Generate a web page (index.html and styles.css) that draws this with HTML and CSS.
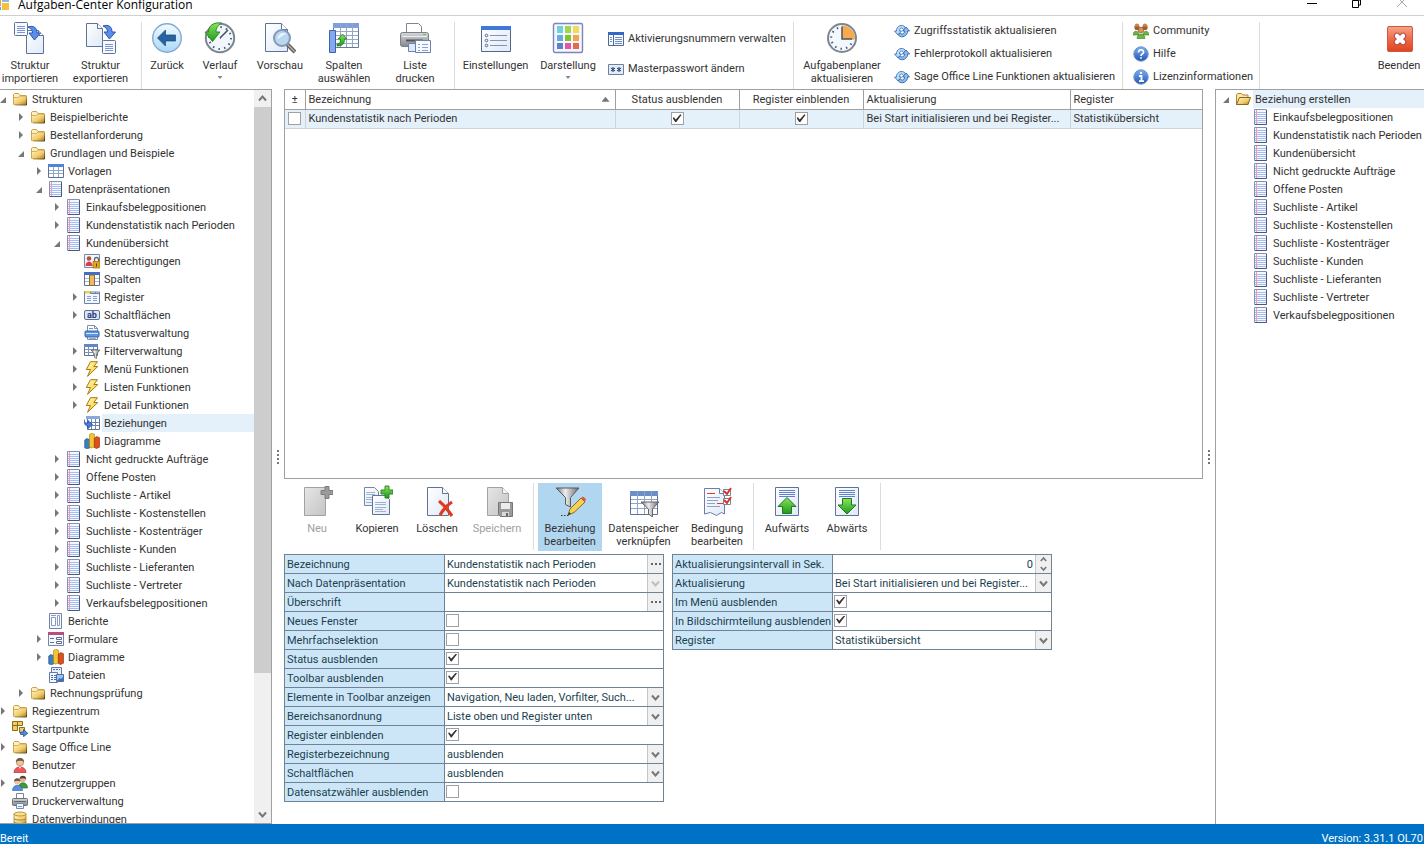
FILE: index.html
```html
<!DOCTYPE html>
<html lang="de">
<head>
<meta charset="utf-8">
<title>Aufgaben-Center Konfiguration</title>
<link rel="stylesheet" href="styles.css">
</head>
<body>
<svg class="defs" aria-hidden="true">
<defs>
<linearGradient id="gFolder" x1="0" y1="0" x2="1" y2="1"><stop offset="0" stop-color="#fff6c8"/><stop offset=".6" stop-color="#f0cb68"/><stop offset="1" stop-color="#b07c20"/></linearGradient>
<linearGradient id="gEdge" x1="0" y1="1" x2="1" y2="0"><stop offset="0" stop-color="#c9a04a"/><stop offset=".5" stop-color="#4a3510"/><stop offset="1" stop-color="#c9a04a"/></linearGradient>
<linearGradient id="gPage" x1="0" y1="0" x2="1" y2="1"><stop offset="0" stop-color="#fff"/><stop offset="1" stop-color="#dfe9f7"/></linearGradient>
<linearGradient id="gGrey" x1="0" y1="0" x2="1" y2="1"><stop offset="0" stop-color="#e6e6e6"/><stop offset="1" stop-color="#c4c4c4"/></linearGradient>
<linearGradient id="gMetal" x1="0" y1="0" x2="1" y2="0"><stop offset="0" stop-color="#6e6e72"/><stop offset=".4" stop-color="#eeeeee"/><stop offset="1" stop-color="#6a6a6e"/></linearGradient>
<linearGradient id="gBlue" x1="0" y1="0" x2="0" y2="1"><stop offset="0" stop-color="#7fb0f2"/><stop offset="1" stop-color="#1e55b4"/></linearGradient>
<linearGradient id="gSky" x1="0" y1="0" x2="0" y2="1"><stop offset="0" stop-color="#f4fbff"/><stop offset="1" stop-color="#a9d7f8"/></linearGradient>
<linearGradient id="gGreen" x1="0" y1="0" x2="0" y2="1"><stop offset="0" stop-color="#8be35c"/><stop offset="1" stop-color="#1d9a1d"/></linearGradient>
<linearGradient id="gRed" x1="0" y1="0" x2="0" y2="1"><stop offset="0" stop-color="#f7a58c"/><stop offset=".5" stop-color="#ee6a48"/><stop offset="1" stop-color="#e0431f"/></linearGradient>
<linearGradient id="gBolt" x1="0" y1="0" x2="1" y2="1"><stop offset="0" stop-color="#fffbc4"/><stop offset="1" stop-color="#f5c518"/></linearGradient>
<linearGradient id="gBody" x1="0" y1="0" x2="0" y2="1"><stop offset="0" stop-color="#d5d7da"/><stop offset="1" stop-color="#85888d"/></linearGradient>

<symbol id="folder" viewBox="0 0 16 16"><path d="M1.500 12.500v-9l1-1h4l1.500 2h6v8z" fill="#fdf0bd" stroke="#c9a04a"/><path d="M1.500 13.500V6.500h5l1.500-1.500h6.500v8.500z" fill="url(#gFolder)" stroke="#c9a04a" stroke-width=".8"/><path d="M3 14h11.500V5" fill="none" stroke="url(#gEdge)"/></symbol>
<symbol id="folderopen" viewBox="0 0 16 16"><path d="M1.500 13.500v-10l1-1h4l1.500 1.500h5v9.500z" fill="#f9e6a4" stroke="#a98733"/><path d="M1.500 13.500l3-7h11l-2.500 7z" fill="url(#gFolder)" stroke="#8a691f"/></symbol>
<symbol id="list" viewBox="1 0 16 16"><path d="M2.500.5h12v15h-12z" fill="#f4f8ff" stroke="#8790b4"/><path d="M14.500 1v14.500H3" fill="none" stroke="#4e5878"/><path d="M3 3.500h11M3 5.500h11M3 7.500h11M3 9.500h11M3 11.500h11M3 13.500h11" stroke="#a5bdf0"/><path d="M4.500 1v14" stroke="#ef9ab0"/></symbol>
<symbol id="table" viewBox="0 0 16 16"><path d="M.5 1.500h15v13H.5z" fill="#fff" stroke="#5d7296"/><path d="M0 1h16v3H0z" fill="#4f83dc"/><path d="M1 7.500h14M1 10.500h14M5.500 4v10M10.500 4v10" stroke="#93a9cc"/></symbol>
<symbol id="auth" viewBox="0 0 16 16"><path d="M.5 1.500h15v13H.5z" fill="#f2f6fc" stroke="#7787a5"/><circle cx="5" cy="5.500" r="2.300" fill="#b1523d"/><path d="M1.500 13c0-6 7-6 7 0z" fill="#e03a44"/><path d="M10.500 9V6.500a2 2 0 014 0V9" fill="none" stroke="#666" stroke-width="1.300"/><path d="M9 8.500h7v6.500H9z" fill="#e2a51e" stroke="#9d6b0b" stroke-width=".7"/><path d="M12 10.500h1v3h-1z" fill="#5f4207"/></symbol>
<symbol id="cols" viewBox="0 0 16 16"><path d="M.5 1.500h15v13H.5z" fill="#fff" stroke="#5d7296"/><path d="M0 1h16v3H0z" fill="#3f6fc0"/><path d="M1 7.500h14M1 10.500h14" stroke="#a9b9d4"/><path d="M5.500 4h5v10.500h-5z" fill="#f2b760" stroke="#7d6a4a"/></symbol>
<symbol id="register" viewBox="0 0 16 16"><path d="M.5 14.500v-12h6v2h9v10z" fill="#f1f6ff" stroke="#6d80a6"/><path d="M1 2h6v2.500H1z" fill="#f2cd4c"/><path d="M6.500 4.500V3h5v1.500M11.500 3h4v2" fill="none" stroke="#6d80a6"/><path d="M3 7.500h4M3 9.500h4M3 11.500h4M9 7.500h4M9 9.500h4M9 11.500h4" stroke="#8aa2d0"/></symbol>
<symbol id="ab" viewBox="0 0 16 16"><rect x=".5" y="3.500" width="15" height="9" rx="1.500" fill="#dfe5f5" stroke="#626f8f"/><text x="8" y="11" class="ab-text">ab</text></symbol>
<symbol id="status" viewBox="0 0 16 16"><path d="M3.500 14.500V.5h7l3 3v11z" fill="#fff" stroke="#7f8fae"/><path d="M10.500.5v3h3M5 3.500h4" fill="none" stroke="#7f8fae"/><rect x="1" y="6" width="14" height="6" rx="1" fill="#5f95df" stroke="#3564ab"/><path d="M2 8.500h12" stroke="#d2e5ff"/><path d="M5 13.500h7" stroke="#9aabc8"/></symbol>
<symbol id="filter" viewBox="0 0 16 16"><path d="M.5 1.500h13v11H.5z" fill="#fff" stroke="#5d7296"/><path d="M0 1h14v3H0z" fill="#6585c4"/><path d="M1 6.500h12M1 9.500h12M4.500 4v8M9.500 4v8" stroke="#7d92b8"/><path d="M7 7h9l-3.500 4v4.500l-2-1V11z" fill="url(#gMetal)" stroke="#606366" stroke-width=".7"/></symbol>
<symbol id="bolt" viewBox="0 0 16 16"><path d="M6.500.7h7L9.800 5.500h4L3.500 15.300l3-6.800H2.300z" fill="url(#gBolt)" stroke="#a97a10"/></symbol>
<symbol id="relation" viewBox="0 0 16 16"><path d="M3.500 1.500h12v13h-12z" fill="#fff" stroke="#5d7296"/><path d="M2 1h14v3H2z" fill="#8ba8dc"/><path d="M4 7.500h11M4 10.500h11M7.500 4v10M11.500 4v10" stroke="#6d84ad"/><path d="M0 4.500c0 3 1.500 3.500 4 3.500V5.500l4.500 4-4.500 4V11C1 11 0 8.500 0 4.500z" fill="#4b7be0" stroke="#22479b" stroke-width=".7"/></symbol>
<symbol id="chart" viewBox="0 0 16 16"><path d="M.7 7l2-1.500 3 1V15l-3 .8-2-1z" fill="#3c7fc0" stroke="#1c4f88" stroke-width=".6"/><path d="M5.500 1.500l2-1.300 3 1V14l-3 1-2-1z" fill="#f3c530" stroke="#a87d10" stroke-width=".6"/><path d="M10.300 5l2.500-1.500 2.700 1.200v9.500L12.500 15.500l-2.200-1z" fill="#dd4f1c" stroke="#8f2a08" stroke-width=".6"/></symbol>
<symbol id="report" viewBox="1 0 16 16"><path d="M2.500.5h12v15h-12z" fill="#f4f8ff" stroke="#7583a5"/><path d="M4.500 4.500h4v8h-4zM10.500 2.500h2v10h-2zM4 2.500h5" fill="#fff" stroke="#8b9bc0"/></symbol>
<symbol id="form" viewBox="0 0 16 16"><path d="M.5 1.500h15v13H.5z" fill="#f4f8ff" stroke="#7583a5"/><path d="M0 1h16v3H0z" fill="#b94c80"/><path d="M2 7.500h4M2 11.500h4" stroke="#5e6c90"/><path d="M8.500 6.500h5v2h-5zM8.500 10.500h5v2h-5z" fill="#fff" stroke="#5e6c90"/></symbol>
<symbol id="files" viewBox="0 0 16 16"><path d="M3.500.5h10v9h-10z" fill="#e7effc" stroke="#6279a8"/><path d="M1.500 5.500h8v10h-8z" fill="#f4f8ff" stroke="#6279a8"/><path d="M3 8.500h5M3 10.500h5M3 12.500h5M5 2.500h7" stroke="#4869ad" stroke-dasharray="2 1"/><path d="M8.500 7.500h7v7h-7z" fill="#9cc4ee" stroke="#4d6fa4"/><path d="M9 14l2.500-3 1.500 1 2-2v4z" fill="#3a70b5"/></symbol>
<symbol id="start" viewBox="0 0 16 16"><path d="M.5.5h5v4h-5zM5.500.5h5v4h-5zM.5 4.500h5v5h-5zM7.500 6.500h5v5h-5z" fill="#f4cd62" stroke="#8d6a1c"/><path d="M8.500 11h3V8.500l4.300 3.800-4.300 3.400V13.500h-3z" fill="#4f87e0" stroke="#1f478f" stroke-width=".7"/></symbol>
<symbol id="user" viewBox="0 0 16 16"><path d="M2 15.500c0-7.500 12-7.500 12 0z" fill="#f0565a" stroke="#b32c31" stroke-width=".7"/><circle cx="8" cy="5" r="3.800" fill="#f0c59a" stroke="#9c6c3c" stroke-width=".6"/><path d="M4 5C3.800-.5 12.200-.5 12 5 10 3.500 7 3.200 4 5z" fill="#6c5a50"/><path d="M7 10l1 2 1-2z" fill="#fff"/></symbol>
<symbol id="users" viewBox="0 0 16 16"><path d="M6.500 13c0-7 9-7 9 0z" fill="#3f9a3c" stroke="#256b23" stroke-width=".6"/><circle cx="10.800" cy="4" r="3" fill="#e4b587"/><path d="M7.500 4c0-4.500 7-4.500 6.600.4C12.500 3 10 3 7.500 4z" fill="#554138"/><path d="M.5 15.500c0-7 10-7 10 0z" fill="#5c8ee0" stroke="#305ba8" stroke-width=".6"/><circle cx="5.200" cy="6.500" r="3" fill="#f0c59a"/><path d="M2 6.500c0-4.500 6.800-4.500 6.500.2C7 5.500 4.500 5.500 2 6.500z" fill="#6c5448"/></symbol>
<symbol id="print16" viewBox="0 0 16 16"><path d="M4.500 6V.5h7V6" fill="#fff" stroke="#7c8597"/><rect x=".5" y="5.500" width="15" height="7" rx="1" fill="url(#gBody)" stroke="#6b6f76"/><path d="M2 8.500h12" stroke="#666"/><path d="M4.500 10.500h7v5h-7z" fill="#eef5ff" stroke="#7587a5"/><path d="M6 13.500h4" stroke="#6aa0e0"/></symbol>
<symbol id="db" viewBox="0 0 16 16"><path d="M2 3v11c0 2.200 12 2.200 12 0V3z" fill="url(#gFolder)" stroke="#9a7216" stroke-width=".7"/><ellipse cx="8" cy="3" rx="6" ry="2" fill="#fbe08a" stroke="#9a7216" stroke-width=".7"/><path d="M2 7.500c1 2 11 2 12 0M2 11c1 2 11 2 12 0" fill="none" stroke="#9a7216" stroke-width=".8"/></symbol>

<symbol id="curve" viewBox="0 0 14 16"><path d="M1 2C7 0 10 3 10 8h3.500L7.500 15 2 8h3.500C5.500 5 4 3.500 1 2z" fill="#5b8ee8" stroke="#2b58b0"/></symbol>
<symbol id="imp" viewBox="0 0 32 32"><path d="M12.500 8.500h12l5 5v18h-17z" fill="url(#gPage)" stroke="#5f7396"/><path d="M24.500 8.500v5h5" fill="#fff" stroke="#5f7396"/><rect x=".5" y=".5" width="13" height="13" rx="1" fill="#f6f9ff" stroke="#5f7396"/><path d="M3 4.500h8M3 6.500h8M3 8.500h8M3 10.500h8" stroke="#7d96cc"/><use href="#curve" x="13" y="3" width="14" height="16"/></symbol>
<symbol id="exp" viewBox="0 0 32 32"><path d="M1.500 1.500h11l5 5v18h-16z" fill="url(#gPage)" stroke="#5f7396"/><path d="M12.500 1.500v5h5" fill="#fff" stroke="#5f7396"/><rect x="17.500" y="18.500" width="13" height="13" rx="1" fill="#f6f9ff" stroke="#5f7396"/><path d="M20 22.500h8M20 24.500h8M20 26.500h8M20 28.500h8" stroke="#7d96cc"/><use href="#curve" x="17" y="2" width="14" height="16"/></symbol>
<symbol id="back" viewBox="0 0 32 32"><circle cx="16" cy="16" r="14.300" fill="url(#gSky)" stroke="#86a9d4" stroke-width="1.400"/><path d="M6.500 16l8-8v5h10v6h-10v5z" fill="#27639f" stroke="#174878" stroke-width=".7"/></symbol>
<symbol id="history" viewBox="0 0 32 32"><circle cx="16" cy="16" r="14.200" fill="#f2f7fb" stroke="#7d858f" stroke-width="2"/><circle cx="16" cy="16" r="11" fill="none" stroke="#4a5a78" stroke-width="2" stroke-dasharray="1.500 4.260"/><path d="M16 16L24 8M16 16h1" stroke="#44506a" stroke-width="1.600"/><path d="M17.500 1C9 0 4.500 4 4.500 10H1l7.500 9.500L16 10h-4c0-3 1-6 5.500-9z" fill="url(#gGreen)" stroke="#2c8a28"/></symbol>
<symbol id="preview" viewBox="0 0 32 32"><path d="M1.500 1.500h16l6 6v22h-22z" fill="url(#gPage)" stroke="#5f7396"/><path d="M17.500 1.500v6h6" fill="#fff" stroke="#5f7396"/><path d="M23 22l8 8" stroke="#5f5f64" stroke-width="4"/><path d="M23.500 22.500l7 7" stroke="#c6b9a2" stroke-width="1.300"/><circle cx="18" cy="16" r="8" fill="#b9d7f1" stroke="#8398b8" stroke-width="2"/><path d="M13 17c2-6 6-7 10-5-4 0-6 4-10 5z" fill="#eaf5ff"/></symbol>
<symbol id="colsel" viewBox="0 0 32 32"><path d="M5.500 1.500h25v24h-25z" fill="#fff" stroke="#6677a0"/><path d="M5 1h26v5H5z" fill="#7f9fd8"/><path d="M6 9.500h24M6 13.500h24M6 17.500h24M6 21.500h24M12.500 1v24M18.500 1v24M24.500 1v24" stroke="#93a7cb"/><path d="M1.500 8.500h6v22h-6z" fill="#84a9ee" stroke="#3b62b2"/><path d="M9 22c3 0 3.500-2 3.500-5H10l4.500-5 4.500 5h-2.500c0 5-2 7-7.500 7z" fill="url(#gGreen)" stroke="#237d20" stroke-width=".8"/></symbol>
<symbol id="print32" viewBox="0 0 32 32"><path d="M7.500 12V1.500h12l3 3V12z" fill="#fff" stroke="#7c8597"/><rect x="1.500" y="10.500" width="28" height="14" rx="2" fill="url(#gBody)" stroke="#7b7f86"/><path d="M3 14.500h25" stroke="#eee"/><path d="M7 18.500h17" stroke="#555" stroke-width="2"/><path d="M24 12h3v1h-3z" fill="#50d030"/><path d="M9.500 21.500h8v8h-8z" fill="#dcebff" stroke="#6a82ad"/><path d="M16.500 18.500h15v12h-15z" fill="#f7faff" stroke="#6a82ad"/><path d="M19 22.500h2M23 22.500h6M19 25.500h2M23 25.500h6M19 28.500h2M23 28.500h6" stroke="#87a3d8"/></symbol>
<symbol id="settings" viewBox="0 0 32 32"><path d="M1.500 4.500h29v25h-29z" fill="url(#gPage)" stroke="#55688c"/><path d="M1 4h30v4H1z" fill="#3e78dc"/><path d="M10 13.500h17M10 18.500h17M10 23.500h17" stroke="#7e94b8"/><circle cx="6.500" cy="13.500" r="1.300" fill="none" stroke="#55688c"/><circle cx="6.500" cy="18.500" r="1.300" fill="none" stroke="#55688c"/><circle cx="6.500" cy="23.500" r="1.300" fill="none" stroke="#55688c"/></symbol>
<symbol id="palette" viewBox="0 0 32 32"><rect x="1.500" y="1.500" width="29" height="29" rx="1.500" fill="#f3f5ff" stroke="#7c86b8" stroke-width="1.400"/><path d="M5 4h6v7H5z" fill="#6fd0de"/><path d="M13 4h6v7h-6z" fill="#a3d64c"/><path d="M21 4h6v7h-6z" fill="#f1dc5a"/><path d="M5 13h6v6H5z" fill="#69a9e4"/><path d="M13 13h6v6h-6z" fill="#7fc62c"/><path d="M21 13h6v6h-6z" fill="#f4a54c"/><path d="M5 21h6v6H5z" fill="#5d80c8"/><path d="M13 21h6v6h-6z" fill="#e455a5"/><path d="M21 21h6v6h-6z" fill="#e8694a"/></symbol>
<symbol id="activation" viewBox="0 0 16 16"><path d="M.5 1.500h15v13H.5z" fill="#f4f8ff" stroke="#55688c"/><path d="M0 1h16v3H0z" fill="#3467c6"/><path d="M5.500 4v10" stroke="#55688c"/><path d="M2 6.500h2M2 8.500h2M2 10.500h2M7 6.500h7M7 8.500h7M7 10.500h7M7 12.500h7" stroke="#7490c2"/></symbol>
<symbol id="password" viewBox="0 0 16 16"><path d="M.5 3.500h15v10H.5z" fill="#e2ecfa" stroke="#6d7f9f"/><path d="M5 6v5M3 7l4 3M7 7l-4 3M11 6v5M9 7l4 3M13 7l-4 3" stroke="#23395f"/></symbol>
<symbol id="planner" viewBox="0 0 32 32"><circle cx="16" cy="16" r="14" fill="#f3f8fd" stroke="#7d858f" stroke-width="2"/><circle cx="16" cy="16" r="10.800" fill="none" stroke="#4a5a78" stroke-width="2" stroke-dasharray="1.500 4.150"/><path d="M16 17V3.500A13 13 0 0129 17z" fill="#f9a94e"/><path d="M16 4.500V17h10" fill="none" stroke="#4c5260" stroke-width="1.500"/></symbol>
<symbol id="refresh" viewBox="0 0 16 16"><path d="M12 5.500C10 1 4 1.500 2.500 6.500V8H.5L4 12l3.500-4H5.500C5.500 5 8 4 9.500 6.500z" fill="#b9daf8" stroke="#3f76b8" stroke-width=".9"/><path d="M4 11.500c2 3.500 8 3 9.500-2V8h2L12 4 8.500 8h2c0 3-2.500 4-4 2z" fill="#8fbcec" stroke="#2f66a8" stroke-width=".9"/></symbol>
<symbol id="community" viewBox="0 0 16 16"><path d="M0 12c0-5 6-5 6 0zM10 12c0-5 6-5 6 0zM4 15.500c0-6 8-6 8 0z" fill="#68b845" stroke="#3d7d25" stroke-width=".6"/><circle cx="4" cy="4.500" r="2.600" fill="#a35c2a"/><circle cx="12" cy="4.500" r="2.600" fill="#a35c2a"/><circle cx="8" cy="7" r="2.800" fill="#d8955a" stroke="#8d4a1e" stroke-width=".7"/><path d="M1.500 3.500c0-4 5-4 5 0zM9.500 3.500c0-4 5-4 5 0z" fill="#c88848"/></symbol>
<symbol id="help" viewBox="0 0 16 16"><circle cx="8" cy="8" r="7.200" fill="url(#gBlue)" stroke="#6d93c8"/><path d="M5.500 6.500C5.500 3 10.700 3 10.500 6.300 10.300 8 8 8 8 10M8 11.300v1.500" fill="none" stroke="#fff" stroke-width="1.700"/></symbol>
<symbol id="info" viewBox="0 0 16 16"><circle cx="8" cy="8" r="7.200" fill="url(#gBlue)" stroke="#6d93c8"/><path d="M8 3v2M6 7h2.500v5M6 12.200h5" fill="none" stroke="#fff" stroke-width="1.800"/></symbol>
<symbol id="exit" viewBox="0 0 32 32"><rect x="4.500" y="4.500" width="25" height="25" rx="1.500" fill="url(#gRed)" stroke="#c9593f"/><path d="M14 14l6 6M20 14l-6 6" stroke="#b04a38" stroke-width="6.500" stroke-linecap="round"/><path d="M14 14l6 6M20 14l-6 6" stroke="#fff" stroke-width="4.500" stroke-linecap="round"/></symbol>

<symbol id="new" viewBox="0 0 32 32"><path d="M3.500 2.500h21v28h-21z" fill="url(#gGrey)" stroke="#a2a2a2"/><path d="M24 1.500h4v4h4v4h-4v4h-4v-4h-4v-4h4z" fill="#9b9b9b" stroke="#7c7c7c"/></symbol>
<symbol id="copy" viewBox="0 0 32 32"><path d="M3.500 2.500h10l4 4v14h-14z" fill="url(#gPage)" stroke="#7186ab"/><path d="M5 7.500h9M5 9.500h9M5 12.500h7M5 14.500h7M5 17.500h7" stroke="#9fb2d4"/><path d="M11.500 10.500h13l4 4v15h-17z" fill="url(#gPage)" stroke="#5f7396"/><path d="M14 17.500h11M14 19.500h11M14 22.500h11M14 24.500h8M14 26.500h11" stroke="#9fb2d4"/><path d="M24 1h4v4h4v4h-4v4h-4V9h-4V5h4z" fill="url(#gGreen)" stroke="#238020" stroke-width=".9"/></symbol>
<symbol id="delete" viewBox="0 0 32 32"><path d="M6.500 2.500h15l6 6v22h-21z" fill="url(#gPage)" stroke="#5f7396"/><path d="M21.500 2.500v6h6" fill="#fff" stroke="#5f7396"/><path d="M18 16c5 4 9 9 13 15M31 17c-5 3-9 8-12 13" fill="none" stroke="#e03a20" stroke-width="3.200"/></symbol>
<symbol id="save" viewBox="0 0 32 32"><path d="M6.500 2.500h15l6 6v22h-21z" fill="url(#gGrey)" stroke="#a2a2a2"/><path d="M21.500 2.500v6h6" fill="#f4f4f4" stroke="#a2a2a2"/><path d="M17.500 17.500h14v14h-12l-2-2z" fill="#9a9a9a" stroke="#777"/><path d="M20 18h9v6h-9z" fill="#ececec"/><path d="M21 27h7v4h-7z" fill="#d9d9d9"/><path d="M25 28h2v3h-2z" fill="#666"/></symbol>
<symbol id="edit" viewBox="0 0 32 32"><path d="M2 3h23l-8.500 9.500V22l-5-2.500V12.500z" fill="url(#gMetal)" stroke="#58595c"/><path d="M7 30.500h9" stroke="#333" stroke-dasharray="1.500 1.500"/><path d="M14 30l2-6L27 13l4 4-11 10.500z" fill="#f5cf56" stroke="#8d6a1c"/><path d="M27 13l2-1.500 3 2.500-1 3z" fill="#e3573f"/><path d="M14 30l1-3 2 2z" fill="#333"/></symbol>
<symbol id="datastore" viewBox="0 0 32 32"><path d="M2.500 6.500h27v23h-27z" fill="#fff" stroke="#5d7296"/><path d="M2 6h28v5H2z" fill="#6b8ec8"/><path d="M3 14.500h26M3 18.500h26M3 23.500h26M9.500 6v23M16.500 6v23M23.500 6v23" stroke="#8fa4c8"/><path d="M13 17h18l-6.500 7v8l-4-3v-5z" fill="url(#gMetal)" stroke="#626467"/></symbol>
<symbol id="condition" viewBox="0 0 32 32"><path d="M3.500 29V3.500h15l5 5V29l-3-1.500-5 3-6-3z" fill="url(#gPage)" stroke="#6a7ea6"/><path d="M18.500 3.500v5h5" fill="#fff" stroke="#6a7ea6"/><path d="M6 8.500h8M16 18.500h6" stroke="#dd3c28"/><path d="M6 12.500h13M6 15.500h11M6 18.500h8M6 21.500h13" stroke="#8ea2c8"/><path d="M22.500 4.500h7v6h-7zM22.500 13.500h7v6h-7z" fill="#fff" stroke="#7484a5"/><path d="M23 6l3 3 4-6M23 15l3 3 4-6" fill="none" stroke="#dc3420" stroke-width="2"/></symbol>
<symbol id="up" viewBox="0 0 32 32"><path d="M4.500 2.500h23v28h-23z" fill="url(#gPage)" stroke="#5f7396"/><path d="M8 5.500h16M8 7.500h16M8 9.500h16M8 11.500h16" stroke="#5c82d0"/><path d="M16 12.500l9 9h-4.500v7h-9v-7H7z" fill="url(#gGreen)" stroke="#1c7a1a"/></symbol>
<symbol id="down" viewBox="0 0 32 32"><path d="M4.500 2.500h23v28h-23z" fill="url(#gPage)" stroke="#5f7396"/><path d="M8 5.500h16M8 7.500h16M8 9.500h16M8 11.500h16" stroke="#5c82d0"/><path d="M16 29l9-9h-4.500v-6.500h-9V20H7z" fill="url(#gGreen)" stroke="#1c7a1a"/></symbol>
<symbol id="app" viewBox="0 0 16 16"><path d="M0 0h6v9H0z" fill="#e8a33c"/><path d="M7 0h7v5H7z" fill="#8eb3e6"/><path d="M7 6h7v7H7z" fill="#f4c044"/><path d="M0 10h6v3H0z" fill="#6d98d8"/></symbol>
<symbol id="chev" viewBox="0 0 9 9"><path d="M1 2.500l3.500 4 3.500-4" fill="none" stroke="currentColor" stroke-width="2"/></symbol>
<symbol id="chevup" viewBox="0 0 9 9"><path d="M1 6.500l3.500-4 3.500 4" fill="none" stroke="currentColor" stroke-width="2"/></symbol>
</defs>
</svg>

<header class="titlebar">
  <svg class="app-icon"><use href="#app"/></svg>
  <h1>Aufgaben-Center Konfiguration</h1>
  <div class="window-buttons">
    <button aria-label="Minimieren"><svg viewBox="0 0 12 12"><path d="M1 3.500h10" stroke="#000"/></svg></button>
    <button aria-label="Wiederherstellen"><svg viewBox="0 0 12 12"><path d="M1.500.5h6v7h-6zM3 0h6.500v5H8" fill="none" stroke="#000"/></svg></button>
    <button aria-label="Schließen"><svg viewBox="0 0 12 12"><path d="M1-3l10 10M11-3L1 7" stroke="#aaa"/></svg></button>
  </div>
</header>

<nav class="ribbon" aria-label="Menüband">
  <div class="group">
    <button class="tool w60"><svg><use href="#imp"/></svg>Struktur<br>importieren</button>
    <button class="tool w81"><svg><use href="#exp"/></svg>Struktur<br>exportieren</button>
  </div>
  <div class="group">
    <button class="tool w50"><svg><use href="#back"/></svg>Zurück</button>
    <button class="tool w56"><svg><use href="#history"/></svg>Verlauf<i class="more"></i></button>
    <button class="tool w64"><svg><use href="#preview"/></svg>Vorschau</button>
    <button class="tool w64"><svg><use href="#colsel"/></svg>Spalten<br>auswählen</button>
    <button class="tool w78"><svg><use href="#print32"/></svg>Liste<br>drucken</button>
  </div>
  <div class="group">
    <button class="tool w81"><svg><use href="#settings"/></svg>Einstellungen</button>
    <button class="tool w64"><svg><use href="#palette"/></svg>Darstellung<i class="more"></i></button>
    <div class="stack two">
      <button><svg><use href="#activation"/></svg>Aktivierungsnummern verwalten</button>
      <button><svg><use href="#password"/></svg>Masterpasswort ändern</button>
    </div>
  </div>
  <div class="group">
    <button class="tool w96"><svg><use href="#planner"/></svg>Aufgabenplaner<br>aktualisieren</button>
    <div class="stack sync">
      <button><svg><use href="#refresh"/></svg>Zugriffsstatistik aktualisieren</button>
      <button><svg><use href="#refresh"/></svg>Fehlerprotokoll aktualisieren</button>
      <button><svg><use href="#refresh"/></svg>Sage Office Line Funktionen aktualisieren</button>
    </div>
  </div>
  <div class="group">
    <div class="stack about">
      <button><svg><use href="#community"/></svg>Community</button>
      <button><svg><use href="#help"/></svg>Hilfe</button>
      <button><svg><use href="#info"/></svg>Lizenzinformationen</button>
    </div>
  </div>
  <button class="tool w50 exit"><svg><use href="#exit"/></svg>Beenden</button>
</nav>

<main class="workspace">
  <aside class="panel nav-panel">
    <ul class="tree">
      <li class="d0"><i class="open"></i><svg><use href="#folder"/></svg><span>Strukturen</span></li>
      <li class="d1"><i class="closed"></i><svg><use href="#folder"/></svg><span>Beispielberichte</span></li>
      <li class="d1"><i class="closed"></i><svg><use href="#folder"/></svg><span>Bestellanforderung</span></li>
      <li class="d1"><i class="open"></i><svg><use href="#folder"/></svg><span>Grundlagen und Beispiele</span></li>
      <li class="d2"><i class="closed"></i><svg><use href="#table"/></svg><span>Vorlagen</span></li>
      <li class="d2"><i class="open"></i><svg><use href="#list"/></svg><span>Datenpräsentationen</span></li>
      <li class="d3"><i class="closed"></i><svg><use href="#list"/></svg><span>Einkaufsbelegpositionen</span></li>
      <li class="d3"><i class="closed"></i><svg><use href="#list"/></svg><span>Kundenstatistik nach Perioden</span></li>
      <li class="d3"><i class="open"></i><svg><use href="#list"/></svg><span>Kundenübersicht</span></li>
      <li class="d4"><i></i><svg><use href="#auth"/></svg><span>Berechtigungen</span></li>
      <li class="d4"><i></i><svg><use href="#cols"/></svg><span>Spalten</span></li>
      <li class="d4"><i class="closed"></i><svg><use href="#register"/></svg><span>Register</span></li>
      <li class="d4"><i class="closed"></i><svg><use href="#ab"/></svg><span>Schaltflächen</span></li>
      <li class="d4"><i></i><svg><use href="#status"/></svg><span>Statusverwaltung</span></li>
      <li class="d4"><i class="closed"></i><svg><use href="#filter"/></svg><span>Filterverwaltung</span></li>
      <li class="d4"><i class="closed"></i><svg><use href="#bolt"/></svg><span>Menü Funktionen</span></li>
      <li class="d4"><i class="closed"></i><svg><use href="#bolt"/></svg><span>Listen Funktionen</span></li>
      <li class="d4"><i class="closed"></i><svg><use href="#bolt"/></svg><span>Detail Funktionen</span></li>
      <li class="d4 selected"><i></i><svg><use href="#relation"/></svg><span>Beziehungen</span></li>
      <li class="d4"><i></i><svg><use href="#chart"/></svg><span>Diagramme</span></li>
      <li class="d3"><i class="closed"></i><svg><use href="#list"/></svg><span>Nicht gedruckte Aufträge</span></li>
      <li class="d3"><i class="closed"></i><svg><use href="#list"/></svg><span>Offene Posten</span></li>
      <li class="d3"><i class="closed"></i><svg><use href="#list"/></svg><span>Suchliste - Artikel</span></li>
      <li class="d3"><i class="closed"></i><svg><use href="#list"/></svg><span>Suchliste - Kostenstellen</span></li>
      <li class="d3"><i class="closed"></i><svg><use href="#list"/></svg><span>Suchliste - Kostenträger</span></li>
      <li class="d3"><i class="closed"></i><svg><use href="#list"/></svg><span>Suchliste - Kunden</span></li>
      <li class="d3"><i class="closed"></i><svg><use href="#list"/></svg><span>Suchliste - Lieferanten</span></li>
      <li class="d3"><i class="closed"></i><svg><use href="#list"/></svg><span>Suchliste - Vertreter</span></li>
      <li class="d3"><i class="closed"></i><svg><use href="#list"/></svg><span>Verkaufsbelegpositionen</span></li>
      <li class="d2"><i></i><svg><use href="#report"/></svg><span>Berichte</span></li>
      <li class="d2"><i class="closed"></i><svg><use href="#form"/></svg><span>Formulare</span></li>
      <li class="d2"><i class="closed"></i><svg><use href="#chart"/></svg><span>Diagramme</span></li>
      <li class="d2"><i></i><svg><use href="#files"/></svg><span>Dateien</span></li>
      <li class="d1"><i class="closed"></i><svg><use href="#folder"/></svg><span>Rechnungsprüfung</span></li>
      <li class="d0"><i class="closed"></i><svg><use href="#folder"/></svg><span>Regiezentrum</span></li>
      <li class="d0"><i></i><svg><use href="#start"/></svg><span>Startpunkte</span></li>
      <li class="d0"><i class="closed"></i><svg><use href="#folder"/></svg><span>Sage Office Line</span></li>
      <li class="d0"><i></i><svg><use href="#user"/></svg><span>Benutzer</span></li>
      <li class="d0"><i class="closed"></i><svg><use href="#users"/></svg><span>Benutzergruppen</span></li>
      <li class="d0"><i></i><svg><use href="#print16"/></svg><span>Druckerverwaltung</span></li>
      <li class="d0"><i></i><svg><use href="#db"/></svg><span>Datenverbindungen</span></li>
    </ul>
    <div class="scrollbar" aria-hidden="true">
      <svg><use href="#chevup"/></svg>
      <div class="track"><div class="thumb"></div></div>
      <svg><use href="#chev"/></svg>
    </div>
  </aside>
  <div class="splitter" aria-hidden="true"><i></i><i></i><i></i><i></i></div>

  <section class="center">
    <div class="panel grid-panel">
      <table>
        <colgroup><col class="c-mark"><col><col class="c-flag"><col class="c-flag"><col class="c-update"><col class="c-register"></colgroup>
        <thead><tr><th class="mid">±</th><th><div class="sorted">Bezeichnung<i></i></div></th><th class="mid">Status ausblenden</th><th class="mid">Register einblenden</th><th>Aktualisierung</th><th>Register</th></tr></thead>
        <tbody><tr>
          <td class="mid"><input type="checkbox" aria-label="Zeile markieren"></td>
          <td>Kundenstatistik nach Perioden</td>
          <td class="mid"><input type="checkbox" checked aria-label="Status ausblenden"></td>
          <td class="mid"><input type="checkbox" checked aria-label="Register einblenden"></td>
          <td>Bei Start initialisieren und bei Register...</td>
          <td>Statistikübersicht</td>
        </tr></tbody>
      </table>
    </div>

    <div class="details">
      <div class="toolbar">
        <div class="group">
          <button class="tool w60" disabled><svg><use href="#new"/></svg>Neu</button>
          <button class="tool w60"><svg><use href="#copy"/></svg>Kopieren</button>
          <button class="tool w60"><svg><use href="#delete"/></svg>Löschen</button>
          <button class="tool w60" disabled><svg><use href="#save"/></svg>Speichern</button>
        </div>
        <div class="group">
          <button class="tool w64 active"><svg><use href="#edit"/></svg><span>Beziehung<br>bearbeiten</span></button>
          <button class="tool w81"><svg><use href="#datastore"/></svg><span>Datenspeicher<br>verknüpfen</span></button>
          <button class="tool w64"><svg><use href="#condition"/></svg><span>Bedingung<br>bearbeiten</span></button>
        </div>
        <div class="group">
          <button class="tool w60"><svg><use href="#up"/></svg>Aufwärts</button>
          <button class="tool w60"><svg><use href="#down"/></svg>Abwärts</button>
        </div>
      </div>

      <form class="forms">
        <div class="fields">
          <div class="row"><label for="f1">Bezeichnung</label><div><input type="text" id="f1" value="Kundenstatistik nach Perioden"><button type="button" class="end dots" aria-label="Bezeichnung auswählen"><i></i><i></i><i></i></button></div></div>
          <div class="row"><label for="f2">Nach Datenpräsentation</label><div><select id="f2"><option>Kundenstatistik nach Perioden</option></select><span class="end faded"><svg><use href="#chev"/></svg></span></div></div>
          <div class="row"><label for="f3">Überschrift</label><div><input type="text" id="f3"><button type="button" class="end dots" aria-label="Überschrift auswählen"><i></i><i></i><i></i></button></div></div>
          <div class="row"><label for="f4">Neues Fenster</label><div><input type="checkbox" id="f4"></div></div>
          <div class="row"><label for="f5">Mehrfachselektion</label><div><input type="checkbox" id="f5"></div></div>
          <div class="row"><label for="f6">Status ausblenden</label><div><input type="checkbox" id="f6" checked></div></div>
          <div class="row"><label for="f7">Toolbar ausblenden</label><div><input type="checkbox" id="f7" checked></div></div>
          <div class="row"><label for="f8">Elemente in Toolbar anzeigen</label><div><select id="f8"><option>Navigation, Neu laden, Vorfilter, Such...</option></select><span class="end"><svg><use href="#chev"/></svg></span></div></div>
          <div class="row"><label for="f9">Bereichsanordnung</label><div><select id="f9"><option>Liste oben und Register unten</option></select><span class="end"><svg><use href="#chev"/></svg></span></div></div>
          <div class="row"><label for="f10">Register einblenden</label><div><input type="checkbox" id="f10" checked></div></div>
          <div class="row"><label for="f11">Registerbezeichnung</label><div><select id="f11"><option>ausblenden</option></select><span class="end"><svg><use href="#chev"/></svg></span></div></div>
          <div class="row"><label for="f12">Schaltflächen</label><div><select id="f12"><option>ausblenden</option></select><span class="end"><svg><use href="#chev"/></svg></span></div></div>
          <div class="row"><label for="f13">Datensatzwähler ausblenden</label><div><input type="checkbox" id="f13"></div></div>
        </div>
        <div class="fields">
          <div class="row"><label for="g1">Aktualisierungsintervall in Sek.</label><div><input type="text" class="num" id="g1" value="0" inputmode="numeric"><span class="end spin"><svg><use href="#chevup"/></svg><svg><use href="#chev"/></svg></span></div></div>
          <div class="row"><label for="g2">Aktualisierung</label><div><select id="g2"><option>Bei Start initialisieren und bei Register...</option></select><span class="end"><svg><use href="#chev"/></svg></span></div></div>
          <div class="row"><label for="g3">Im Menü ausblenden</label><div><input type="checkbox" id="g3" checked></div></div>
          <div class="row"><label for="g4">In Bildschirmteilung ausblenden</label><div><input type="checkbox" id="g4" checked></div></div>
          <div class="row"><label for="g5">Register</label><div><select id="g5"><option>Statistikübersicht</option></select><span class="end"><svg><use href="#chev"/></svg></span></div></div>
        </div>
      </form>
    </div>
  </section>

  <div class="splitter" aria-hidden="true"><i></i><i></i><i></i><i></i></div>
  <aside class="panel create-panel">
    <ul class="tree">
      <li class="d0 selected"><i class="open"></i><svg><use href="#folderopen"/></svg><span>Beziehung erstellen</span></li>
      <li class="d1"><i></i><svg><use href="#list"/></svg><span>Einkaufsbelegpositionen</span></li>
      <li class="d1"><i></i><svg><use href="#list"/></svg><span>Kundenstatistik nach Perioden</span></li>
      <li class="d1"><i></i><svg><use href="#list"/></svg><span>Kundenübersicht</span></li>
      <li class="d1"><i></i><svg><use href="#list"/></svg><span>Nicht gedruckte Aufträge</span></li>
      <li class="d1"><i></i><svg><use href="#list"/></svg><span>Offene Posten</span></li>
      <li class="d1"><i></i><svg><use href="#list"/></svg><span>Suchliste - Artikel</span></li>
      <li class="d1"><i></i><svg><use href="#list"/></svg><span>Suchliste - Kostenstellen</span></li>
      <li class="d1"><i></i><svg><use href="#list"/></svg><span>Suchliste - Kostenträger</span></li>
      <li class="d1"><i></i><svg><use href="#list"/></svg><span>Suchliste - Kunden</span></li>
      <li class="d1"><i></i><svg><use href="#list"/></svg><span>Suchliste - Lieferanten</span></li>
      <li class="d1"><i></i><svg><use href="#list"/></svg><span>Suchliste - Vertreter</span></li>
      <li class="d1"><i></i><svg><use href="#list"/></svg><span>Verkaufsbelegpositionen</span></li>
    </ul>
  </aside>
</main>

<footer class="statusbar"><span>Bereit</span><span>Version: 3.31.1 OL70</span></footer>
</body>
</html>
```
FILE: styles.css
```css
* { box-sizing: border-box; }

body {
  margin: 0;
  height: 100vh;
  display: flex;
  flex-direction: column;
  overflow: hidden;
  background: #fff;
  color: #333;
  font: 11px/13px Roboto, "Noto Sans", sans-serif;
}

button, input, select {
  margin: 0;
  padding: 0;
  border: 0;
  background: none;
  color: inherit;
  font: inherit;
}

.defs { position: absolute; width: 0; height: 0; }
.ab-text { fill: #22407e; font: bold 9px Roboto, sans-serif; text-anchor: middle; }

/* Title bar */
.titlebar {
  display: flex;
  flex: none;
  height: 15px;
  padding-bottom: 6px;
  align-items: center;
}
.app-icon { width: 16px; height: 16px; margin-left: -5px; }
.titlebar h1 {
  flex: 1;
  margin: 0 0 0 7px;
  color: #000;
  font: 12px/16px "Open Sans", "Noto Sans", sans-serif;
}
.window-buttons { display: flex; align-self: flex-start; }
.window-buttons button { width: 45px; height: 12px; }
.window-buttons svg { display: block; width: 12px; height: 12px; margin: 0 auto; }

/* Ribbon and toolbar */
.ribbon {
  display: flex;
  flex: none;
  height: 74px;
  padding-top: 6px;
  border-top: 1px solid #d0d0d0;
}
.group { display: flex; border-right: 1px solid #dcdcdc; }
.tool {
  flex: none;
  align-self: flex-start;
  text-align: center;
  white-space: nowrap;
}
.tool svg { display: block; width: 32px; height: 32px; margin: 0 auto 5px; }
.tool .more {
  display: block;
  width: 5px;
  height: 3px;
  margin: 4px auto 0;
  background: #888;
  clip-path: polygon(0 0, 100% 0, 50% 100%);
}
.tool:disabled { color: #a0a0a0; }
.w50 { width: 50px; }
.w56 { width: 56px; }
.w60 { width: 60px; }
.w64 { width: 64px; }
.w78 { width: 78px; }
.w81 { width: 81px; }
.w96 { width: 96px; }
.exit { margin-left: auto; }

.stack {
  display: flex;
  flex-direction: column;
  align-items: flex-start;
  white-space: nowrap;
}
.stack button { display: flex; align-items: center; height: 23px; gap: 4px; }
.stack svg { width: 16px; height: 16px; }
.stack.two { padding: 5px 0 0 8px; gap: 7px; width: 193px; }
.stack.sync { width: 232px; padding-left: 4px; margin-top: -3px; }
.stack.about { width: 136px; padding-left: 10px; margin-top: -3px; }

/* Workspace */
.workspace { display: flex; flex: 1; min-height: 0; }
.panel { border: 1px solid #a0a0a0; overflow: hidden; }
.nav-panel { display: flex; flex: none; width: 272px; border-left: 0; }
.create-panel { flex: none; width: 209px; border-right: 0; border-bottom: 0; }
.center { display: flex; flex-direction: column; flex: 1; min-width: 0; }
.splitter {
  display: flex;
  flex: none;
  flex-direction: column;
  justify-content: center;
  align-items: center;
  gap: 2px;
  width: 12px;
}
.splitter i { width: 2px; height: 2px; background: #777; }

/* Trees */
.tree { flex: 1; min-width: 0; margin: 0; padding: 0; list-style: none; overflow: hidden; }
.tree li { display: flex; align-items: center; height: 18px; white-space: nowrap; }
.tree svg { flex: none; width: 16px; height: 16px; }
.tree span { flex: 1; height: 18px; margin-left: 2px; padding: 1px 0 0 2px; line-height: 18px; }
.tree i { flex: none; width: 12px; height: 8px; }
.tree i::before { content: ""; display: block; background: #777; }
.tree .closed::before { width: 4px; height: 8px; margin-left: 1px; clip-path: polygon(0 0, 100% 50%, 0 100%); }
.tree .open::before { width: 6px; height: 6px; margin: 2px 0 0; clip-path: polygon(100% 0, 100% 100%, 0 100%); }
.tree .selected span { background: #e4f0fa; }
.d1 { padding-left: 18px; }
.d2 { padding-left: 36px; }
.d3 { padding-left: 54px; }
.d4 { padding-left: 72px; }
.create-panel .tree { padding-left: 7px; }

.scrollbar { display: flex; flex: none; flex-direction: column; width: 17px; background: #f0f0f0; color: #777; }
.scrollbar svg { flex: none; width: 9px; height: 9px; margin: 4px; }
.track { flex: 1; }
.thumb { height: 81%; background: #cdcdcd; }

/* Grid */
.grid-panel { flex: 1; min-height: 0; }
table { width: 100%; border-collapse: collapse; table-layout: fixed; }
.c-mark { width: 20px; }
.c-flag { width: 124px; }
.c-update { width: 207px; }
.c-register { width: 132px; }
th, td { height: 19px; padding: 0 3px; text-align: left; font-weight: normal; white-space: nowrap; overflow: hidden; }
th { border-bottom: 1px solid #a0a0a0; border-right: 1px solid #a0a0a0; }
td { background: #e4f0fa; border-bottom: 1px solid #ccd3da; border-right: 1px solid #ccd3da; }
th:last-child, td:last-child { border-right: 0; }
.mid { padding: 0; text-align: center; }
.sorted { display: flex; align-items: center; justify-content: space-between; }
.sorted i { width: 8px; height: 5px; margin-right: 2px; background: #777; clip-path: polygon(50% 0, 100% 100%, 0 100%); }

input[type="checkbox"] {
  appearance: none;
  display: inline-block;
  flex: none;
  width: 13px;
  height: 13px;
  border: 1px solid #a0a0a0;
  background: #fff;
  vertical-align: middle;
}
input[type="checkbox"]:checked::before {
  content: "";
  display: block;
  width: 9px;
  height: 8px;
  margin: 1px;
  background: #333;
  clip-path: polygon(0 45%, 16% 38%, 36% 66%, 88% 0, 100% 10%, 40% 100%, 32% 100%);
}

/* Details */
.details { flex: none; height: 345px; }
.toolbar { display: flex; height: 75px; padding: 4px 0 4px 3px; }
.toolbar .group { padding: 0 4px; }
.toolbar .group:first-child { padding: 0 6px 0 0; }
.toolbar .group:nth-child(2) { gap: 1px; }
.toolbar .group:last-child { padding: 0 3px; }
.toolbar .tool {
  display: flex;
  flex-direction: column;
  align-items: center;
  justify-content: flex-start;
  height: 68px;
  padding-top: 2px;
}
.active { background: #b1d6f0; }

.forms { display: flex; align-items: flex-start; gap: 8px; color: #1c3f4f; }
.fields { width: 380px; border: 1px solid #6f8397; border-bottom: 0; }
.row { display: flex; height: 19px; border-bottom: 1px solid #6f8397; }
.row label { flex: none; width: 160px; padding: 1px 0 0 2px; border-right: 1px solid #6f8397; background: #cde6f7; line-height: 18px; white-space: nowrap; }
.row > div { display: flex; flex: 1; min-width: 0; align-items: center; }
.row input[type="checkbox"] { margin: 0 0 2px 1px; }
.row input[type="text"], .row select {
  appearance: none;
  flex: 1;
  min-width: 0;
  height: 18px;
  padding: 1px 2px 0;
  outline: 0;
  line-height: 17px;
}
.row .num { padding-right: 4px; text-align: right; }
.end {
  display: flex;
  flex: none;
  align-items: center;
  justify-content: center;
  width: 16px;
  height: 18px;
  border-left: 1px solid #c4c4c4;
  background: #f0f0f0;
  color: #777;
}
.end svg { width: 9px; height: 9px; }
.faded { color: #c0c0c0; }
.dots { gap: 2px; }
.dots i { width: 2px; height: 2px; background: #666; }
.spin { flex-direction: column; gap: 2px; }
.spin svg { width: 7px; height: 7px; }

.statusbar {
  display: flex;
  flex: none;
  justify-content: space-between;
  height: 20px;
  padding: 8px 1px 0 0;
  background: #0072c6;
  color: #fff;
}
```
